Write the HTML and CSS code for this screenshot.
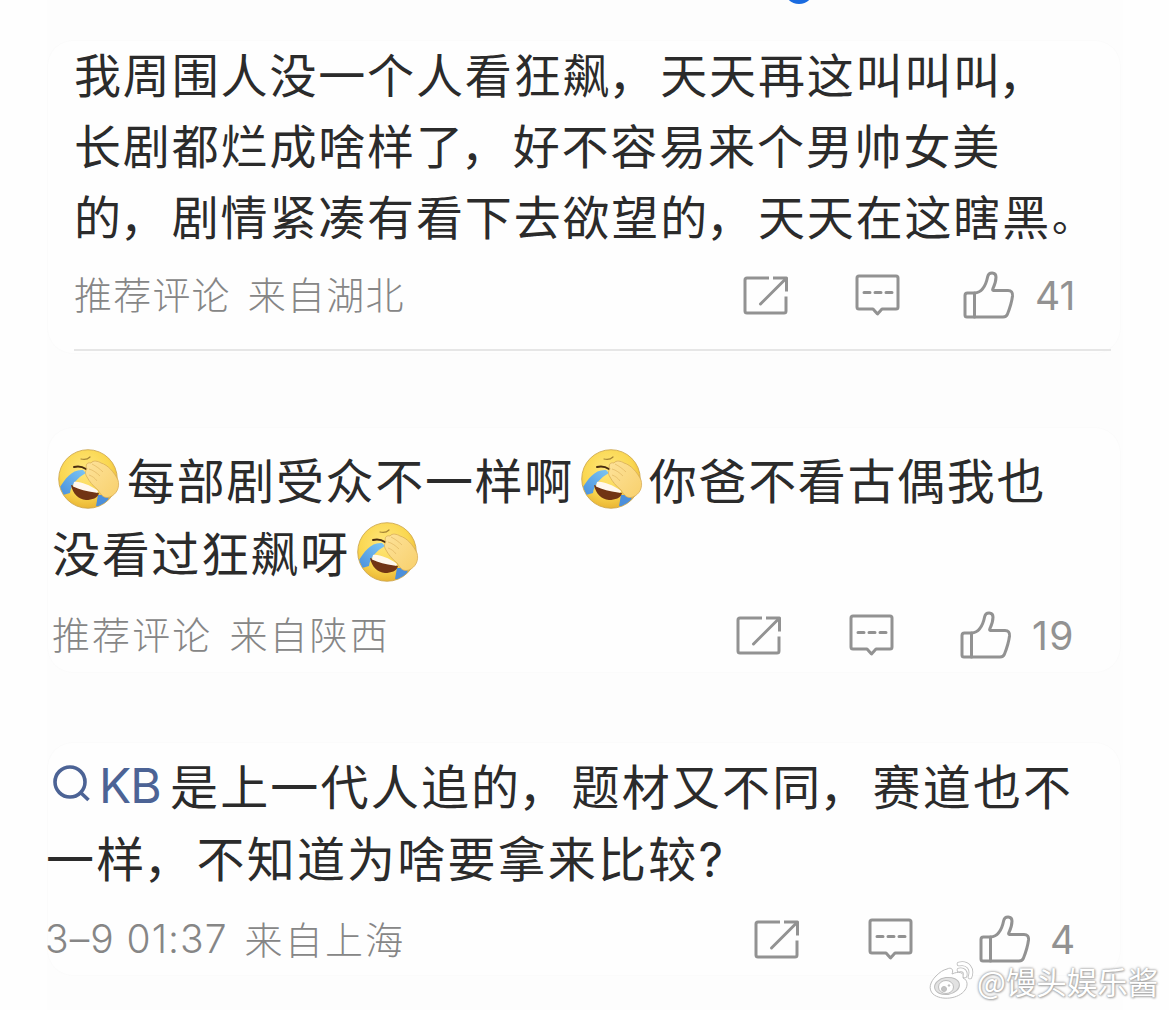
FILE: index.html
```html
<!DOCTYPE html>
<html lang="zh-CN">
<head>
<meta charset="utf-8">
<title>评论</title>
<link rel="stylesheet" href="styles.css">
</head>
<body>
<svg class="defs" width="0" height="0" aria-hidden="true">
  <defs>
    <radialGradient id="face" cx="45%" cy="35%" r="65%">
      <stop offset="0" stop-color="#ffe67c"/><stop offset=".65" stop-color="#fad750"/><stop offset="1" stop-color="#eab534"/>
    </radialGradient>
    <linearGradient id="hand" x1="0" y1="0" x2="1" y2="1">
      <stop offset="0" stop-color="#fde29a"/><stop offset="1" stop-color="#f8d06c"/>
    </linearGradient>
    <linearGradient id="tear" x1="1" y1="0" x2="0" y2="1">
      <stop offset="0" stop-color="#7cc6f4"/><stop offset="1" stop-color="#4a90dc"/>
    </linearGradient>
    <clipPath id="round"><circle cx="30" cy="30" r="29"/></clipPath>
    <symbol id="laugh" viewBox="0 0 62 62">
      <circle cx="30" cy="30" r="29.3" fill="url(#face)" stroke="#c9a24a" stroke-width=".8"/>
      <g clip-path="url(#round)">
        <path d="M25 21 C14 20 7 30 2 38 L5 46 L12 44 C13 36 19 29 28 24 Z" fill="url(#tear)"/>
        <path d="M40 46 L52 46 L46 60 L38 57 Z" fill="#4c8fdb"/>
        <path d="M13 36 C21 39 32 42 41 44 C40 49 34 51 28 51 C20 50 15 45 13 36 Z" fill="#713414"/>
        <path d="M16 33 C22 32 31 36 39 41 C41 43 40 44 37 43.500 C29 42.500 21 40.500 15 37.500 Z" fill="#fff8ee"/>
        <path d="M16 18 C20 17 25 18 28 20" fill="none" stroke="#4a2d10" stroke-width="2" stroke-linecap="round"/>
        <path d="M23 10 C27 11 30 10 32 8" fill="none" stroke="#a58434" stroke-width="1.2" stroke-linecap="round"/>
      </g>
      <path d="M29 20 C27 16 29 13 33 14 C35 11 40 12 43 14 C50 16 56 23 60 31 C62 38 59 45 52 48 C46 50 43 46 40 41 C35 37 31 32 29 28 C27 25 27 22 29 20 Z" fill="url(#hand)" stroke="#d8ad58" stroke-width=".8"/>
      <path d="M34 15 C38 17 42 20 45 23 M31 20 C35 21 39 24 42 27 M31 26 C34 27 37 29 39 32" fill="none" stroke="#e3bb67" stroke-width=".8"/>
    </symbol>
    <symbol id="share" viewBox="0 0 46 40">
      <g fill="none" stroke="#929292" stroke-width="3" stroke-linejoin="round">
        <path d="M26 2 H4 Q2 2 2 4 V35 Q2 37 4 37 H41 Q43 37 43 35 V20.5"/>
        <path d="M30 2 H43.5 V15.5"/>
        <path d="M43 2.5 L17.5 28" stroke-linecap="round"/>
      </g>
    </symbol>
    <symbol id="comment" viewBox="0 0 46 44">
      <g fill="none" stroke="#929292" stroke-width="3" stroke-linejoin="round" stroke-linecap="round">
        <path d="M4 2 H41 Q43 2 43 4 V33 Q43 35 41 35 H27 L22.5 40 L18 35 H4 Q2 35 2 33 V4 Q2 2 4 2 Z"/>
        <path d="M9 18.5 H15 M20 18.5 H26 M31 18.5 H37"/>
      </g>
    </symbol>
    <symbol id="like" viewBox="0 0 52 50">
      <g fill="none" stroke="#929292" stroke-width="3" stroke-linejoin="round" stroke-linecap="round">
        <path d="M11.5 22 H4.500 Q2 22 2 24.500 V44 Q2 46 4 46 H40 Q43.500 46 44.500 43 Q48.500 33 49.500 25 Q50 19.500 45 19.500 H30.500 Q29 19.500 30 17.500 C32.500 12 33 9 33 6 C33 .7 25.700 .7 24.700 5.500 C23.200 13 19.500 21.500 11.500 22 Z"/>
        <path d="M11.500 22 V46"/>
      </g>
    </symbol>
  </defs>
</svg>

<main class="feed">
  <div class="dot"></div>

  <article class="card card-first">
    <p class="text">
      <span class="line">我周围人没一个人看狂飙<span class="comma">，</span>天天再这叫叫叫<span class="comma">，</span></span>
      <span class="line">长剧都烂成啥样了<span class="comma">，</span>好不容易来个男帅女美</span>
      <span class="line">的<span class="comma">，</span>剧情紧凑有看下去欲望的<span class="comma">，</span>天天在这瞎黑<span class="stop">。</span></span>
    </p>
    <footer class="meta">
      <span class="source"><span>推荐评论</span><span>来自湖北</span></span>
      <span class="actions">
        <svg class="share"><use href="#share"/></svg>
        <svg class="comment"><use href="#comment"/></svg>
        <svg class="like"><use href="#like"/></svg>
        <span class="count">41</span>
      </span>
    </footer>
  </article>

  <article class="card card-second">
    <p class="text">
      <span class="line"><svg class="emoji"><use href="#laugh"/></svg><span>每部剧受众不一样啊</span><svg class="emoji"><use href="#laugh"/></svg><span>你爸不看古偶我也</span></span>
      <span class="line"><span>没看过狂飙呀</span><svg class="emoji"><use href="#laugh"/></svg></span>
    </p>
    <footer class="meta">
      <span class="source"><span>推荐评论</span><span>来自陕西</span></span>
      <span class="actions">
        <svg class="share"><use href="#share"/></svg>
        <svg class="comment"><use href="#comment"/></svg>
        <svg class="like"><use href="#like"/></svg>
        <span class="count">19</span>
      </span>
    </footer>
  </article>

  <article class="card card-third">
    <p class="text">
      <span class="line"><a class="topic"><svg class="search" viewBox="0 0 38 38"><circle cx="17" cy="17" r="15" /><path d="M27.500 27.500 L35.500 35"/></svg><span>KB</span></a><span>是上一代人追的<span class="comma">，</span>题材又不同<span class="comma">，</span>赛道也不</span></span>
      <span class="line"><span>一样<span class="comma">，</span>不知道为啥要拿来比较<span class="latin">?</span></span></span>
    </p>
    <footer class="meta">
      <span class="source"><span class="time">3–9 01:37</span><span>来自上海</span></span>
      <span class="actions">
        <svg class="share"><use href="#share"/></svg>
        <svg class="comment"><use href="#comment"/></svg>
        <svg class="like"><use href="#like"/></svg>
        <span class="count">4</span>
      </span>
    </footer>
  </article>

  <div class="watermark">
    <svg class="weibo" viewBox="0 0 46 40">
      <g fill="#fff" stroke="#bdbdbd" stroke-width="1">
        <path d="M18 8 C22 6 25 8 23 13 C29 10 36 11 34 17 C39 19 39 25 36 29 C30 38 12 40 4 33 C-1 28 1 21 7 15 C11 11 14 9 18 8 Z"/>
        <ellipse cx="18" cy="25" rx="12.500" ry="8.500" fill="#e2e2e2" transform="rotate(-8 18 25)"/>
        <ellipse cx="17" cy="26" rx="7.500" ry="6.500"/>
        <circle cx="15" cy="28" r="2.500" fill="#c4c4c4"/><circle cx="20" cy="24.500" r=".8" fill="#c4c4c4"/>
      </g>
      <g fill="none" stroke-linecap="round">
        <path d="M30 3 C39 1 44 8 41 16 M30 9 C35 8 37 11 36 15" stroke="#bbb" stroke-width="4.600"/>
        <path d="M30 3 C39 1 44 8 41 16 M30 9 C35 8 37 11 36 15" stroke="#fff" stroke-width="3"/>
      </g>
    </svg>
    <span>@馒头娱乐酱</span>
  </div>
</main>
</body>
</html>
```
FILE: styles.css
```css
* { box-sizing: border-box; }
body {
  margin: 0;
  background: #fff;
  font-family: "Noto Sans CJK SC", sans-serif;
  color: #2b2b2b;
}
.defs { position: absolute; }
.feed {
  position: relative;
  width: 1169px;
  height: 1010px;
  overflow: hidden;
  padding: 40px 48px 0 47px;
  background: linear-gradient(90deg, #fefefe 47px, #fdfdfd 47px, #fdfdfd 1123px, #fefefe 1123px);
}
.dot {
  position: absolute;
  left: 784px;
  top: -26px;
  width: 30px;
  height: 30px;
  border-radius: 50%;
  background: #1a6be0;
}
.card {
  position: relative;
  display: flex;
  flex-direction: column;
  border-radius: 26px;
  background: #fefefe;
  box-shadow: inset 0 0 0 1px #fbfbfb;
}
.text { margin: 0; }
.line {
  display: flex;
  align-items: center;
  white-space: nowrap;
}
.comma { margin: 0 3px 0 -3px; }
.card-first .comma:last-child { margin-left: -4px; }
.stop { font-size: 40px; margin-left: 1px; }
.meta {
  display: flex;
  justify-content: space-between;
  align-items: flex-start;
  color: #929292;
}
.source {
  display: flex;
  gap: 17px;
  font-size: 38px;
  line-height: 48px;
  font-weight: 300;
  color: #868686;
  white-space: nowrap;
}
.actions { display: flex; align-items: flex-start; }
.actions svg { flex: none; }
.share { width: 46px; height: 40px; margin-top: 5px; }
.comment { width: 46px; height: 44px; margin-top: 3px; }
.like { width: 52px; height: 50px; }
.count {
  font-family: Inter, sans-serif;
  font-size: 39px;
  line-height: 38px;
  margin-top: 6px;
}

.card-first { height: 314px; padding: 0 0 0 27px; }
.card-first .text { margin-top: -3px; font-size: 47px; letter-spacing: 1.85px; line-height: 71px; }
.card-first .meta { margin-top: 21px; padding-right: 44px; }
.card-first .source { margin-top: -2px; letter-spacing: 1.2px; }
.card-first .comment { margin-left: 66px; }
.card-first .like { margin-left: 62px; }
.card-first .count { width: 42px; margin-left: 20px; }
.card-first::after {
  content: "";
  position: absolute;
  left: 27px;
  right: 10px;
  bottom: 3px;
  height: 2px;
  background: #e6e6e6;
}

.card-second { height: 246px; margin-top: 73px; padding: 15px 0 0 5px; }
.card-second .text { font-size: 48px; letter-spacing: 1.65px; line-height: 73px; }
.card-second .meta { margin-top: 23px; padding-right: 44px; }
.card-second .source { margin-top: -2px; letter-spacing: 2.1px; }
.card-second .comment { margin-left: 67px; }
.card-second .like { margin-left: 65px; }
.card-second .count { width: 45px; margin-left: 20px; letter-spacing: 1.5px; }
.emoji { width: 62px; height: 62px; margin: 3px 7px 0 6px; flex: none; }
.line > span + .emoji { margin: 3px 6px 0 7px; }

.card-third { height: 234px; margin-top: 69px; padding: 5px 0 0; }
.card-third .text { font-size: 48px; letter-spacing: 2.18px; line-height: 71px; margin-left: -1px; }
.card-third .meta { margin-top: 20px; padding-right: 47px; }
.card-third .source { margin-top: -1px; letter-spacing: 2.3px; }
.card-third .comment { margin-left: 68px; }
.card-third .like { margin-left: 65px; }
.card-third .count { width: 24px; margin-left: 19px; }
.topic {
  display: flex;
  align-items: center;
  width: 124px;
  padding-left: 7px;
  gap: 8px;
  color: #4c6395;
  font-family: Inter, sans-serif;
  letter-spacing: -1px;
}
.topic span { padding-top: 3px; }
.search { width: 38px; height: 38px; flex: none; fill: none; stroke: #4c6395; stroke-width: 3.6; }
.latin { font-family: Inter, sans-serif; }
.card-third .time { font-family: Inter, sans-serif; font-size: 39px; letter-spacing: 1px; margin-left: -2px; padding-top: 1px; }

.watermark {
  position: absolute;
  left: 929px;
  top: 961px;
  display: flex;
  align-items: center;
  gap: 2px;
  font-size: 30.5px;
  line-height: 40px;
  color: #fff;
  text-shadow: 0 0 2px #999, 0 0 3px #aaa, 1px 1px 2px #bbb;
  white-space: nowrap;
}
.weibo { width: 46px; height: 40px; flex: none; }
```
